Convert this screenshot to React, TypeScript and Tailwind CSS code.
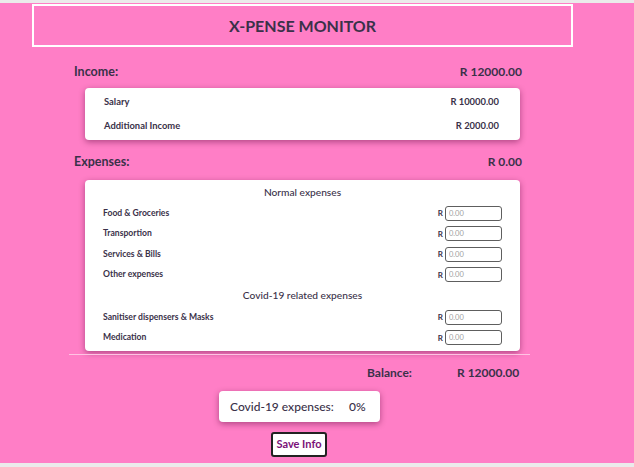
export default function App() {
  const normal = ["Food & Groceries", "Transportion", "Services & Bills", "Other expenses"];
  const covid = ["Sanitiser dispensers & Masks", "Medication"];

  const row = (label: string) => (
    <div key={label} className="flex h-[20.5px] items-center justify-between">
      <span className="text-[8.6px] font-bold">{label}</span>
      <div className="flex items-center gap-[2px]">
        <span className="text-[8px] font-bold">R</span>
        <input
          placeholder="0.00"
          className="h-[15px] w-[57px] rounded-[3px] border-[1.5px] border-[#5e5e5e] bg-white pl-[3px] text-[7.5px] placeholder:text-[#a0a0a0] outline-none"
        />
      </div>
    </div>
  );

  return (
    <div
      className="h-[467px] overflow-hidden bg-[#ebebeb] pt-[3px] text-[#3a3149]"
      style={{ fontFamily: "Lato, 'Open Sans', sans-serif" }}
    >
      <div className="flex h-[460px] flex-col bg-[#ff7ec6]">
        {/* Header */}
        <div className="ml-[32px] mt-[1px] flex h-[43px] w-[541px] items-center justify-center border-2 border-white">
          <h1 className="text-[16px] font-bold">X-PENSE MONITOR</h1>
        </div>

        {/* Income */}
        <div className="ml-[74px] mt-[15px] flex h-[20px] w-[448px] items-center justify-between text-[12.5px] font-bold">
          <span>Income:</span>
          <span className="text-[12px]">R 12000.00</span>
        </div>
        <div className="ml-[85px] mt-[6px] w-[435px] rounded-[4px] bg-white py-[2px] pl-[19px] pr-[21px] shadow-[0_2px_6px_rgba(80,0,50,0.45)]">
          <div className="flex h-[24px] items-center justify-between text-[9.4px] font-bold">
            <span>Salary</span>
            <span>R 10000.00</span>
          </div>
          <div className="flex h-[24px] items-center justify-between text-[9.4px] font-bold">
            <span>Additional Income</span>
            <span>R 2000.00</span>
          </div>
        </div>

        {/* Expenses */}
        <div className="ml-[74px] mt-[12px] flex h-[20px] w-[448px] items-center justify-between text-[12.5px] font-bold">
          <span>Expenses:</span>
          <span className="text-[12px]">R 0.00</span>
        </div>
        <div className="ml-[85px] mt-[8px] w-[435px] rounded-[4px] bg-white px-[18px] pb-[3px] pt-[3px] shadow-[0_2px_6px_rgba(80,0,50,0.45)]">
          <div className="flex h-[20px] items-center justify-center text-[10.2px] font-medium">
            Normal expenses
          </div>
          {normal.map(row)}
          <div className="flex h-[22px] items-center justify-center text-[10.2px] font-medium">
            Covid-19 related expenses
          </div>
          {covid.map(row)}
        </div>

        <div className="ml-[69px] mt-[3px] h-px w-[461px] bg-[#ffc3e3]" />

        {/* Balance */}
        <div className="ml-[367px] mt-[8px] flex h-[20px] items-center text-[12px] font-bold">
          <span className="w-[90px]">Balance:</span>
          <span>R 12000.00</span>
        </div>

        <div className="ml-[219px] mt-[8px] flex h-[31px] w-[161px] items-center rounded-[4px] bg-white pl-[11px] text-[12px] font-medium shadow-[0_2px_6px_rgba(80,0,50,0.45)]">
          <span className="w-[119px] whitespace-nowrap">Covid-19 expenses:</span>
          <span>0%</span>
        </div>

        <button className="ml-[271px] mt-[10px] flex h-[25px] w-[56px] items-center justify-center whitespace-nowrap rounded-[3px] border-2 border-[#222] bg-white text-[11px] font-bold text-[#7a0f78]">
          Save Info
        </button>
      </div>
    </div>
  );
}
